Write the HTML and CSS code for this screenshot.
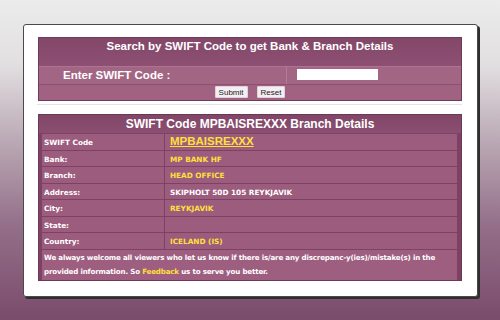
FILE: index.html
```html
<!DOCTYPE html>
<html lang="en">
<head>
    <meta charset="UTF-8">
    <title>SWIFT Code MPBAISREXXX Branch Details</title>
    <link rel="stylesheet" href="styles.css">
</head>
<body>
    <div class="card">
        <form class="search">
            <div class="search-title">Search by SWIFT Code to get Bank &amp; Branch Details</div>
            <div class="search-row">
                <label class="search-label" for="swift">Enter SWIFT Code :</label>
                <div class="search-field"><input type="text" id="swift"></div>
            </div>
            <div class="search-buttons">
                <button type="button">Submit</button>
                <button type="reset">Reset</button>
            </div>
        </form>

        <div class="divider"></div>

        <div class="details">
            <div class="details-title">SWIFT Code MPBAISREXXX Branch Details</div>
            <div class="details-grid">
                <div class="key">SWIFT Code</div>
                <div class="val code"><a href="#">MPBAISREXXX</a></div>
                <div class="key">Bank:</div>
                <div class="val">MP BANK HF</div>
                <div class="key">Branch:</div>
                <div class="val">HEAD OFFICE</div>
                <div class="key">Address:</div>
                <div class="val plain">SKIPHOLT 50D 105 REYKJAVIK</div>
                <div class="key">City:</div>
                <div class="val">REYKJAVIK</div>
                <div class="key">State:</div>
                <div class="val"></div>
                <div class="key">Country:</div>
                <div class="val">ICELAND (IS)</div>
            </div>
            <div class="note">
                <p>We always welcome all viewers who let us know if there is/are any discrepanc-y(ies)/mistake(s) in the</p>
                <p>provided information. So <a href="#">Feedback</a> us to serve you better.</p>
            </div>
        </div>
    </div>
</body>
</html>
```

FILE: styles.css
```css
* {
    margin: 0;
    padding: 0;
    box-sizing: border-box;
}

html, body {
    height: 320px;
    overflow: hidden;
}

body {
    background: linear-gradient(180deg, #ececec 0%, #e2dfe1 20%, #b9a7b3 45%, #94708a 70%, #7a4b6b 100%);
    padding: 24px 22px 0 23px;
}

.card {
    width: 455px;
    height: 273px;
    background: #ffffff;
    border: 1px solid #4a4a4a;
    border-radius: 3px;
    box-shadow: 2px 2px 0 #2e2e2e;
    padding: 12px 15px 0 14px;
}

/* search box */
.search {
    border: 1px solid #6f3a5b;
    background: #9c5d7d;
}

.search-title {
    height: 28px;
    background: linear-gradient(180deg, #834768, #8d5074);
    color: #ffffff;
    font: bold 11.5px "Liberation Sans", Arial, sans-serif;
    text-align: center;
    padding-top: 2px;
}

.search-row {
    display: flex;
    height: 19px;
    background: #a36584;
    border-top: 1px solid #b0738f;
    border-bottom: 1px solid #8e5072;
}

.search-label {
    width: 248px;
    color: #ffffff;
    font: bold 11.5px "Liberation Sans", Arial, sans-serif;
    padding: 2px 0 0 24px;
    border-right: 1px solid #b47b96;
}

.search-field {
    flex: 1;
    padding: 2px 0 0 10px;
}

.search-field input {
    width: 81px;
    height: 11px;
    border: none;
    background: #ffffff;
    display: block;
}

.search-buttons {
    display: flex;
    justify-content: center;
    gap: 9px;
    height: 15px;
    padding: 1px 0 0 0;
    background: #a16281;
}

.search-buttons button {
    height: 12px;
    padding: 0 3px;
    font: 8px "Liberation Sans", Arial, sans-serif;
    color: #222222;
    background: #f4eef2;
    border: 1px solid #e0d2da;
    border-radius: 1px;
}

.divider {
    height: 14px;
    border-top: 1px solid #e4e4e4;
    margin-top: 3px;
    margin-left: -1px;
}

/* branch details */
.details {
    height: 167px;
    margin-top: -4px;
    background: #7d4163;
    border: 1px solid #6d3757;
    padding: 0 4px 2px 3px;
}

.details-title {
    height: 18px;
    margin: 0 -4px 0 -3px;
    background: linear-gradient(180deg, #824667, #8b4f71);
    color: #ffffff;
    font: bold 12px "Liberation Sans", Arial, sans-serif;
    text-align: center;
    padding-top: 2px;
}

.details-grid {
    display: grid;
    grid-template-columns: 122px 1fr;
    grid-auto-rows: 15.5px;
    gap: 1px;
    margin-top: 1px;
}

.key, .val {
    background: #9c5c7e;
    font: bold 7.3px "DejaVu Sans", Verdana, sans-serif;
    color: #ffffff;
    padding: 4px 0 0 2px;
}

.val {
    color: #ffe03a;
    padding-left: 5px;
}

.val.plain {
    color: #ffffff;
}

.val.code {
    padding-top: 1px;
}

.val.code a {
    font: bold 11.5px "Liberation Sans", Arial, sans-serif;
    color: #ffe03a;
}

.note {
    margin-top: 1px;
    height: 30px;
    background: #9e5e80;
    color: #ffffff;
    font: bold 7.1px/14px "DejaVu Sans", Verdana, sans-serif;
    letter-spacing: -0.17px;
    padding: 1px 0 0 2px;
    white-space: nowrap;
}

.note a {
    color: #ffe03a;
    text-decoration: none;
}
```
